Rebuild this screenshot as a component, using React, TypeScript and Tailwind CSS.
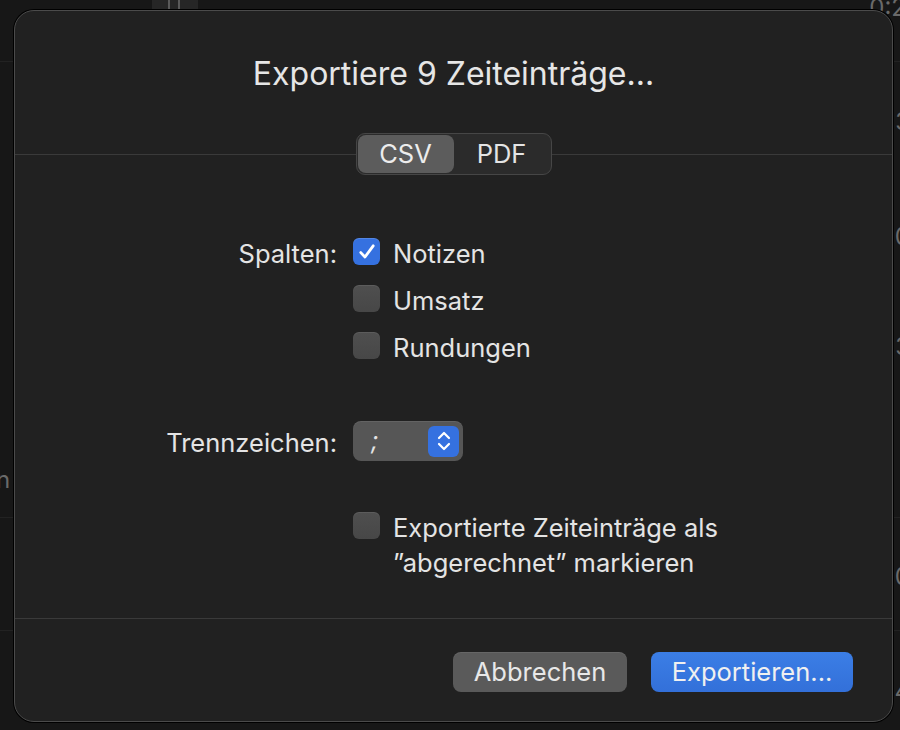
function Checkbox({ checked }: { checked?: boolean }) {
  if (checked) {
    return (
      <div className="w-[27px] h-[27px] shrink-0 rounded-[6px] bg-[#3571e0] flex items-center justify-center shadow-[inset_0_1px_0_rgba(255,255,255,0.15)]">
        <svg width="20" height="20" viewBox="0 0 20 20" fill="none">
          <path d="M3.8 10.6 L8 15 L16.2 3.8" stroke="#ffffff" strokeWidth="2.8" strokeLinecap="round" strokeLinejoin="round" />
        </svg>
      </div>
    );
  }
  return (
    <div className="w-[27px] h-[27px] shrink-0 rounded-[6px] bg-gradient-to-b from-[#4f4f4f] to-[#474747] shadow-[inset_0_1px_0_rgba(255,255,255,0.08)]" />
  );
}

function CheckRow({ label, checked }: { label: string; checked?: boolean }) {
  return (
    <div className="flex items-center gap-[13px] h-[27px]">
      <Checkbox checked={checked} />
      <span className="pt-[4px] text-[25.5px] leading-none">{label}</span>
    </div>
  );
}

export default function App() {
  return (
    <div
      className="relative w-[900px] h-[730px] overflow-hidden bg-[#171717] text-[#e4e4e4]"
      style={{ fontFamily: "Inter, 'Noto Sans', sans-serif" }}
    >
      {/* window behind the sheet */}
      <div className="absolute left-[152px] top-0 w-[46px] h-[10px] bg-[#262626]" />
      <div className="absolute left-[168px] -top-[2px] w-[12px] h-[12px] border-l-2 border-r-2 border-[#5a5a5a]" />
      <div className="absolute right-[-6px] top-[-10px] text-[24px] text-[#6a6a6a]">0:2</div>
      <div className="absolute right-[-10px] top-[104px] text-[24px] text-[#6a6a6a]">3</div>
      <div className="absolute right-[-10px] top-[219px] text-[24px] text-[#6a6a6a]">0</div>
      <div className="absolute right-[-10px] top-[329px] text-[24px] text-[#6a6a6a]">3</div>
      <div className="absolute right-[-10px] top-[444px] text-[24px] text-[#6a6a6a]">1</div>
      <div className="absolute right-[-10px] top-[559px] text-[24px] text-[#6a6a6a]">0</div>
      <div className="absolute right-[-10px] top-[674px] text-[24px] text-[#6a6a6a]">4</div>
      <div className="absolute left-[-4px] top-[462px] text-[24px] text-[#6a6a6a]">n</div>
      <div className="absolute left-0 top-[61px] w-full h-px bg-[#222222]" />
      <div className="absolute left-0 top-[517px] w-full h-px bg-[#222222]" />
      <div className="absolute left-0 top-[630px] w-full h-px bg-[#222222]" />

      {/* sheet */}
      <div className="absolute left-[14px] top-[10px] w-[879px] h-[712px] rounded-[20px] bg-[#212121] border border-[#4b4b4b] shadow-[0_0_0_1px_#000000] flex flex-col">
        <h1 className="pt-[44px] text-center text-[32px] leading-[38px] font-normal text-[#e6e6e6]">
          Exportiere 9 Zeiteinträge...
        </h1>

        <div className="mt-[40px] flex items-center">
          <div className="flex-1 h-px bg-[#3a3a3a]" />
          <div className="flex w-[196px] h-[42px] p-[1px] rounded-[9px] bg-[#2b2b2b] border border-[#464646]">
            <div className="w-[96px] rounded-[8px] bg-[#5c5c5c] flex items-center justify-center text-[25.5px] text-[#ececec]">
              CSV
            </div>
            <div className="flex-1 flex items-center justify-center text-[25.5px] text-[#e4e4e4]">PDF</div>
          </div>
          <div className="flex-1 h-px bg-[#3a3a3a]" />
        </div>

        <div className="mt-[63px] grid grid-cols-[322px_1fr] gap-x-4">
          <div className="h-[27px] pt-[4px] flex items-center justify-end text-[25.5px] leading-none">Spalten:</div>
          <div className="flex flex-col gap-[20px]">
            <CheckRow label="Notizen" checked />
            <CheckRow label="Umsatz" />
            <CheckRow label="Rundungen" />
          </div>

          <div className="mt-[62px] h-[40px] pt-[4px] flex items-center justify-end text-[25.5px] leading-none">Trennzeichen:</div>
          <div className="mt-[62px]">
            <div className="w-[110px] h-[40px] rounded-[8px] bg-[#565656] flex items-center justify-between pl-[18px] pr-[4px] shadow-[inset_0_1px_0_rgba(255,255,255,0.08)]">
              <span className="text-[25px] italic">;</span>
              <div className="w-[31px] h-[31px] rounded-[6px] bg-[#3571e0] flex items-center justify-center">
                <svg width="16" height="24" viewBox="0 0 16 24" fill="none">
                  <path d="M3 9 L8 4 L13 9" stroke="#ffffff" strokeWidth="2.2" strokeLinecap="round" strokeLinejoin="round" />
                  <path d="M3 15 L8 20 L13 15" stroke="#ffffff" strokeWidth="2.2" strokeLinecap="round" strokeLinejoin="round" />
                </svg>
              </div>
            </div>
          </div>

          <div />
          <div className="mt-[51px] flex gap-[13px]">
            <Checkbox />
            <div className="-mt-[2px] text-[25.5px] leading-[35px]">
              Exportierte Zeiteinträge als
              <br />
              ”abgerechnet” markieren
            </div>
          </div>
        </div>

        <div className="mt-auto h-px bg-[#3a3a3a]" />
        <div className="flex justify-end gap-[24px] pt-[33px] pb-[29px] pr-[39px]">
          <button className="w-[174px] h-[40px] rounded-[8px] bg-[#5a5a5a] text-[25.5px] text-[#e8e8e8] shadow-[inset_0_1px_0_rgba(255,255,255,0.08)]">
            Abbrechen
          </button>
          <button className="w-[202px] h-[40px] rounded-[8px] bg-gradient-to-b from-[#3b7ee6] to-[#3370d9] text-[25.5px] text-[#f0f0f0]">
            Exportieren...
          </button>
        </div>
      </div>
    </div>
  );
}
